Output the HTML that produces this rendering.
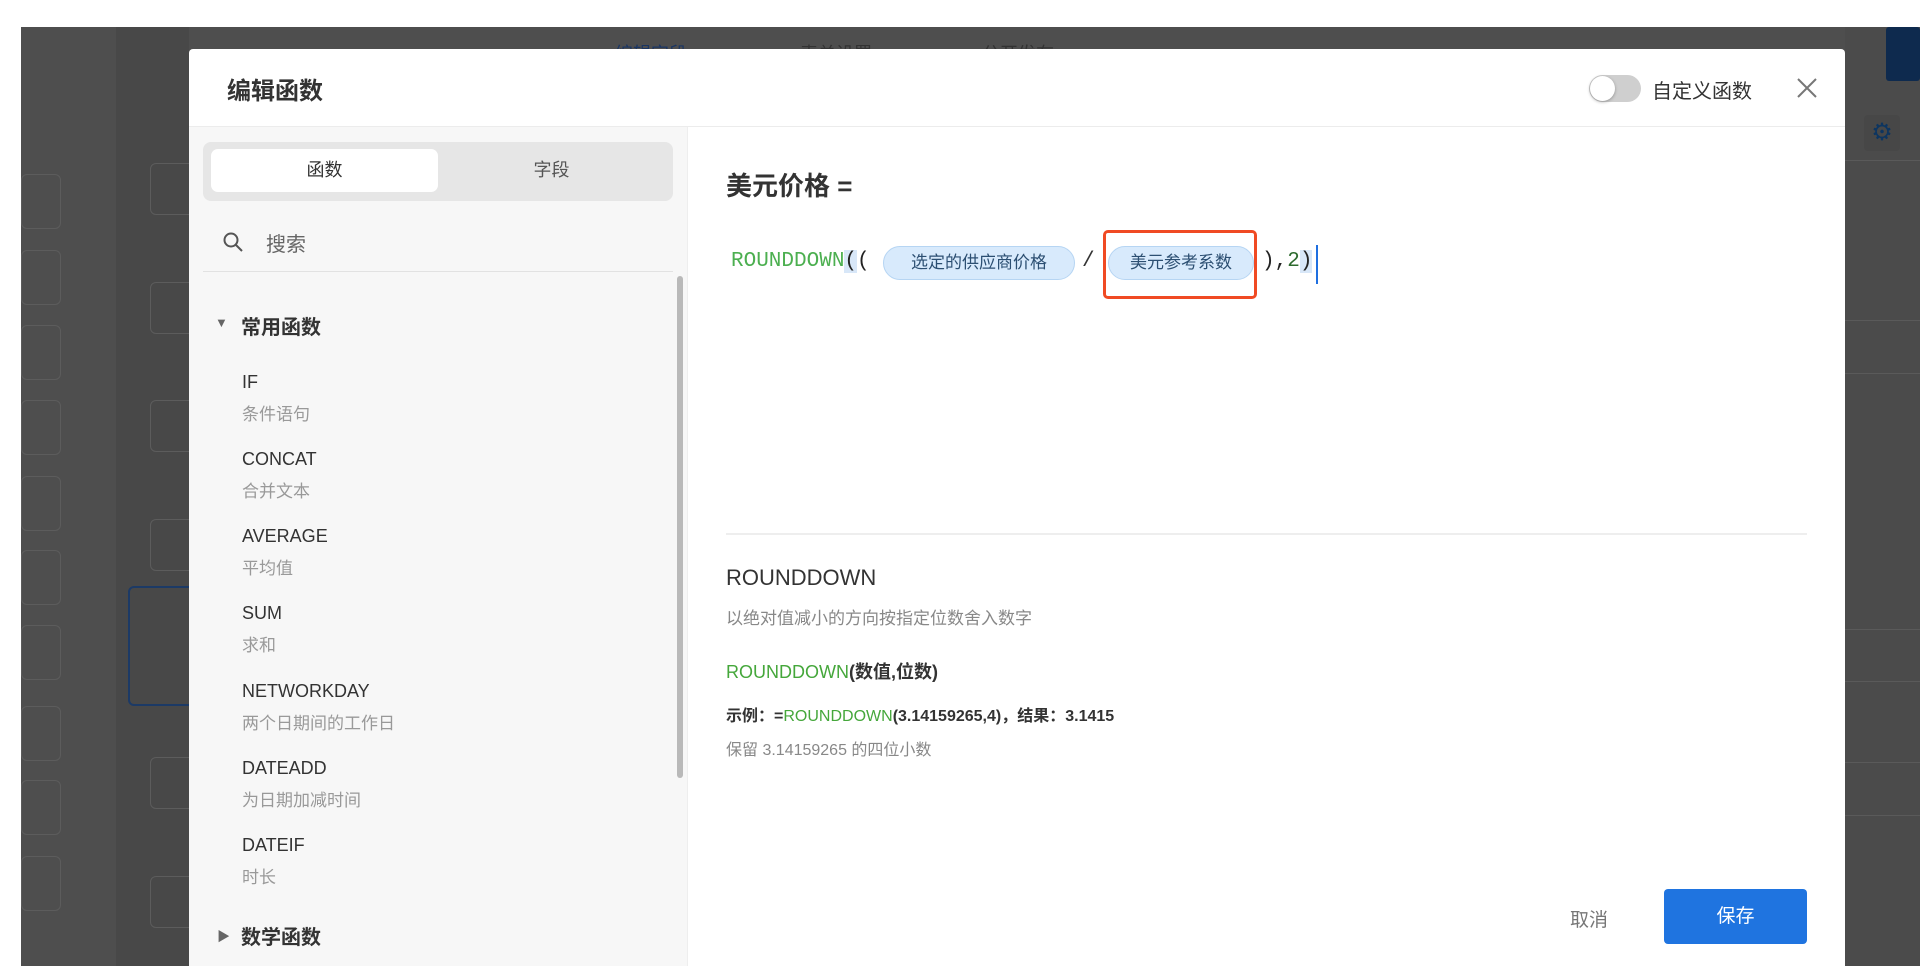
<!DOCTYPE html>
<html><head><meta charset="utf-8"><style>
*{margin:0;padding:0;box-sizing:border-box}
body{width:1920px;height:966px;overflow:hidden;background:#fff;font-family:"Liberation Sans","Noto Sans CJK SC",sans-serif;position:relative}
.a{position:absolute;white-space:nowrap}
.bg{position:absolute;left:21px;top:27px;right:0;bottom:0;background:#4e4e4e}
.box{position:absolute;border:1px solid #5c5c5c;border-radius:6px}
.name{font-size:18px;color:#333;font-weight:500}
.desc{font-size:17px;color:#999}
.pill{position:absolute;top:246px;height:34px;background:#d8eafc;border:1px solid #b6d5f3;border-radius:17px;font-size:17px;color:#2c4f72;line-height:32px;text-align:center}
.mono{font-family:"Liberation Mono",monospace;font-size:21px}
</style></head><body>
<div class="bg"></div>
<div class="a" style="left:116px;top:27px;width:73px;height:939px;background:#484848"></div>
<div class="a" style="left:1845px;top:27px;width:75px;height:939px;background:#4b4b4b"></div>
<div class="a" style="left:1886px;top:27px;width:34px;height:54px;background:#0e2a4e;border-radius:3px"></div>
<div class="a" style="left:1864px;top:115px;width:36px;height:36px;background:#474747;border-radius:4px;color:#0d3560;font-size:24px;text-align:center;line-height:36px">⚙</div>
<div class="a" style="left:1845px;top:160px;width:75px;height:1px;background:#5a5a5a"></div>
<div class="a" style="left:1845px;top:320px;width:75px;height:1px;background:#5a5a5a"></div>
<div class="a" style="left:1845px;top:373px;width:75px;height:1px;background:#5a5a5a"></div>
<div class="a" style="left:1845px;top:629px;width:75px;height:1px;background:#5a5a5a"></div>
<div class="a" style="left:1845px;top:681px;width:75px;height:1px;background:#5a5a5a"></div>
<div class="a" style="left:1845px;top:762px;width:75px;height:1px;background:#5a5a5a"></div>
<div class="a" style="left:1845px;top:815px;width:75px;height:1px;background:#5a5a5a"></div>
<div class="box" style="left:21px;top:174px;width:40px;height:55px"></div>
<div class="box" style="left:21px;top:250px;width:40px;height:55px"></div>
<div class="box" style="left:21px;top:325px;width:40px;height:55px"></div>
<div class="box" style="left:21px;top:400px;width:40px;height:55px"></div>
<div class="box" style="left:21px;top:476px;width:40px;height:55px"></div>
<div class="box" style="left:21px;top:550px;width:40px;height:55px"></div>
<div class="box" style="left:21px;top:625px;width:40px;height:55px"></div>
<div class="box" style="left:21px;top:706px;width:40px;height:55px"></div>
<div class="box" style="left:21px;top:780px;width:40px;height:55px"></div>
<div class="box" style="left:21px;top:856px;width:40px;height:55px"></div>
<div class="box" style="left:150px;top:163px;width:60px;height:52px"></div>
<div class="box" style="left:150px;top:282px;width:60px;height:52px"></div>
<div class="box" style="left:150px;top:400px;width:60px;height:52px"></div>
<div class="box" style="left:150px;top:519px;width:60px;height:52px"></div>
<div class="box" style="left:128px;top:586px;width:80px;height:120px;border:2px solid #1c3a66"></div>
<div class="box" style="left:150px;top:757px;width:60px;height:52px"></div>
<div class="box" style="left:150px;top:876px;width:60px;height:52px"></div>
<div class="a" style="left:615px;top:40px;font-size:18px;color:#1a3563">编辑字段</div>
<div class="a" style="left:800px;top:40px;font-size:18px;color:#333">表单设置</div>
<div class="a" style="left:982px;top:40px;font-size:18px;color:#333">公开发布</div>

<div class="a" style="left:189px;top:49px;width:1656px;height:917px;background:#fff;border-radius:4px 4px 0 0;overflow:hidden">
  <div class="a" style="left:38px;top:22px;font-size:24px;font-weight:600;color:#333">编辑函数</div>
  <div class="a" style="left:1400px;top:26px;width:52px;height:27px;background:#cfcfcf;border-radius:14px"></div>
  <div class="a" style="left:1401px;top:27px;width:25px;height:25px;background:#fff;border-radius:50%;box-shadow:0 1px 3px rgba(0,0,0,.3)"></div>
  <div class="a" style="left:1463px;top:26px;font-size:20px;color:#333">自定义函数</div>
  <svg class="a" style="left:1607px;top:28px" width="22" height="22" viewBox="0 0 22 22"><path d="M2 2L20 20M20 2L2 20" stroke="#777" stroke-width="2"/></svg>
  <div class="a" style="left:0;top:77px;width:1656px;height:1px;background:#ececec"></div>
  <div class="a" style="left:0;top:78px;width:499px;height:860px;background:#f7f7f7;border-right:1px solid #eee"></div>
  <div class="a" style="left:14px;top:93px;width:470px;height:59px;background:#e6e6e6;border-radius:8px"></div>
  <div class="a" style="left:22px;top:100px;width:227px;height:43px;background:#fff;border-radius:7px;font-size:18px;color:#333;text-align:center;line-height:43px">函数</div>
  <div class="a" style="left:249px;top:100px;width:227px;height:43px;font-size:18px;color:#555;text-align:center;line-height:43px">字段</div>
  <svg class="a" style="left:33px;top:182px" width="22" height="22" viewBox="0 0 22 22"><circle cx="9" cy="9" r="6.5" stroke="#555" stroke-width="2" fill="none"/><path d="M14 14L20 20" stroke="#555" stroke-width="2"/></svg>
  <div class="a" style="left:77px;top:179px;font-size:20px;color:#666">搜索</div>
  <div class="a" style="left:14px;top:222px;width:470px;height:1px;background:#e2e2e2"></div>
  <div class="a" style="left:488px;top:227px;width:6px;height:502px;background:#b9b9b9;border-radius:3px"></div>
  <div class="a" style="left:26px;top:266px;font-size:13px;color:#666">▼</div>
  <div class="a" style="left:52px;top:262px;font-size:20px;font-weight:600;color:#333">常用函数</div>
  <div class="a name" style="left:53px;top:323px">IF</div><div class="a desc" style="left:53px;top:351px">条件语句</div>
  <div class="a name" style="left:53px;top:400px">CONCAT</div><div class="a desc" style="left:53px;top:428px">合并文本</div>
  <div class="a name" style="left:53px;top:477px">AVERAGE</div><div class="a desc" style="left:53px;top:505px">平均值</div>
  <div class="a name" style="left:53px;top:554px">SUM</div><div class="a desc" style="left:53px;top:582px">求和</div>
  <div class="a name" style="left:53px;top:632px">NETWORKDAY</div><div class="a desc" style="left:53px;top:660px">两个日期间的工作日</div>
  <div class="a name" style="left:53px;top:709px">DATEADD</div><div class="a desc" style="left:53px;top:737px">为日期加减时间</div>
  <div class="a name" style="left:53px;top:786px">DATEIF</div><div class="a desc" style="left:53px;top:814px">时长</div>
  <div class="a" style="left:28px;top:877px;font-size:13px;color:#666">▶</div>
  <div class="a" style="left:52px;top:872px;font-size:20px;font-weight:600;color:#333">数学函数</div>
  <div class="a" style="left:537px;top:117px;font-size:26px;font-weight:600;color:#333">美元价格 =</div>
</div>
<div class="a mono" style="left:731px;top:250px;color:#4caf50">ROUNDDOWN<span style="color:#222;background:#d8e7f8">(</span><span style="color:#222">(</span></div>
<div class="pill" style="left:883px;width:192px">选定的供应商价格</div>
<div class="a mono" style="left:1082px;top:250px;color:#333">/</div>
<div class="a" style="left:1103px;top:230px;width:154px;height:69px;border:3px solid #f04a23;border-radius:5px"></div>
<div class="pill" style="left:1108px;width:146px">美元参考系数</div>
<div class="a mono" style="left:1262px;top:250px;color:#222">),<span style="color:#2e6b2e">2</span><span style="background:#d8e7f8">)</span></div>
<div class="a" style="left:1316px;top:245px;width:2px;height:39px;background:#1f6fe0"></div>
<div class="a" style="left:726px;top:533px;width:1081px;height:2px;background:#eee"></div>
<div class="a" style="left:726px;top:565px;font-size:22px;font-weight:500;color:#333">ROUNDDOWN</div>
<div class="a" style="left:726px;top:604px;font-size:17px;color:#888">以绝对值减小的方向按指定位数舍入数字</div>
<div class="a" style="left:726px;top:658px;font-size:18px;font-weight:600;color:#333"><span style="color:#45a73b;font-weight:500">ROUNDDOWN</span>(数值,位数)</div>
<div class="a" style="left:726px;top:702px;font-size:16px;font-weight:600;color:#333">示例：=<span style="color:#45a73b;font-weight:500">ROUNDDOWN</span>(3.14159265,4)，结果：3.1415</div>
<div class="a" style="left:726px;top:736px;font-size:16px;color:#888">保留 3.14159265 的四位小数</div>
<div class="a" style="left:1570px;top:905px;font-size:19px;color:#777">取消</div>
<div class="a" style="left:1664px;top:889px;width:143px;height:55px;background:#1f74e0;border-radius:4px;color:#fff;font-size:19px;text-align:center;line-height:55px">保存</div>
</body></html>
